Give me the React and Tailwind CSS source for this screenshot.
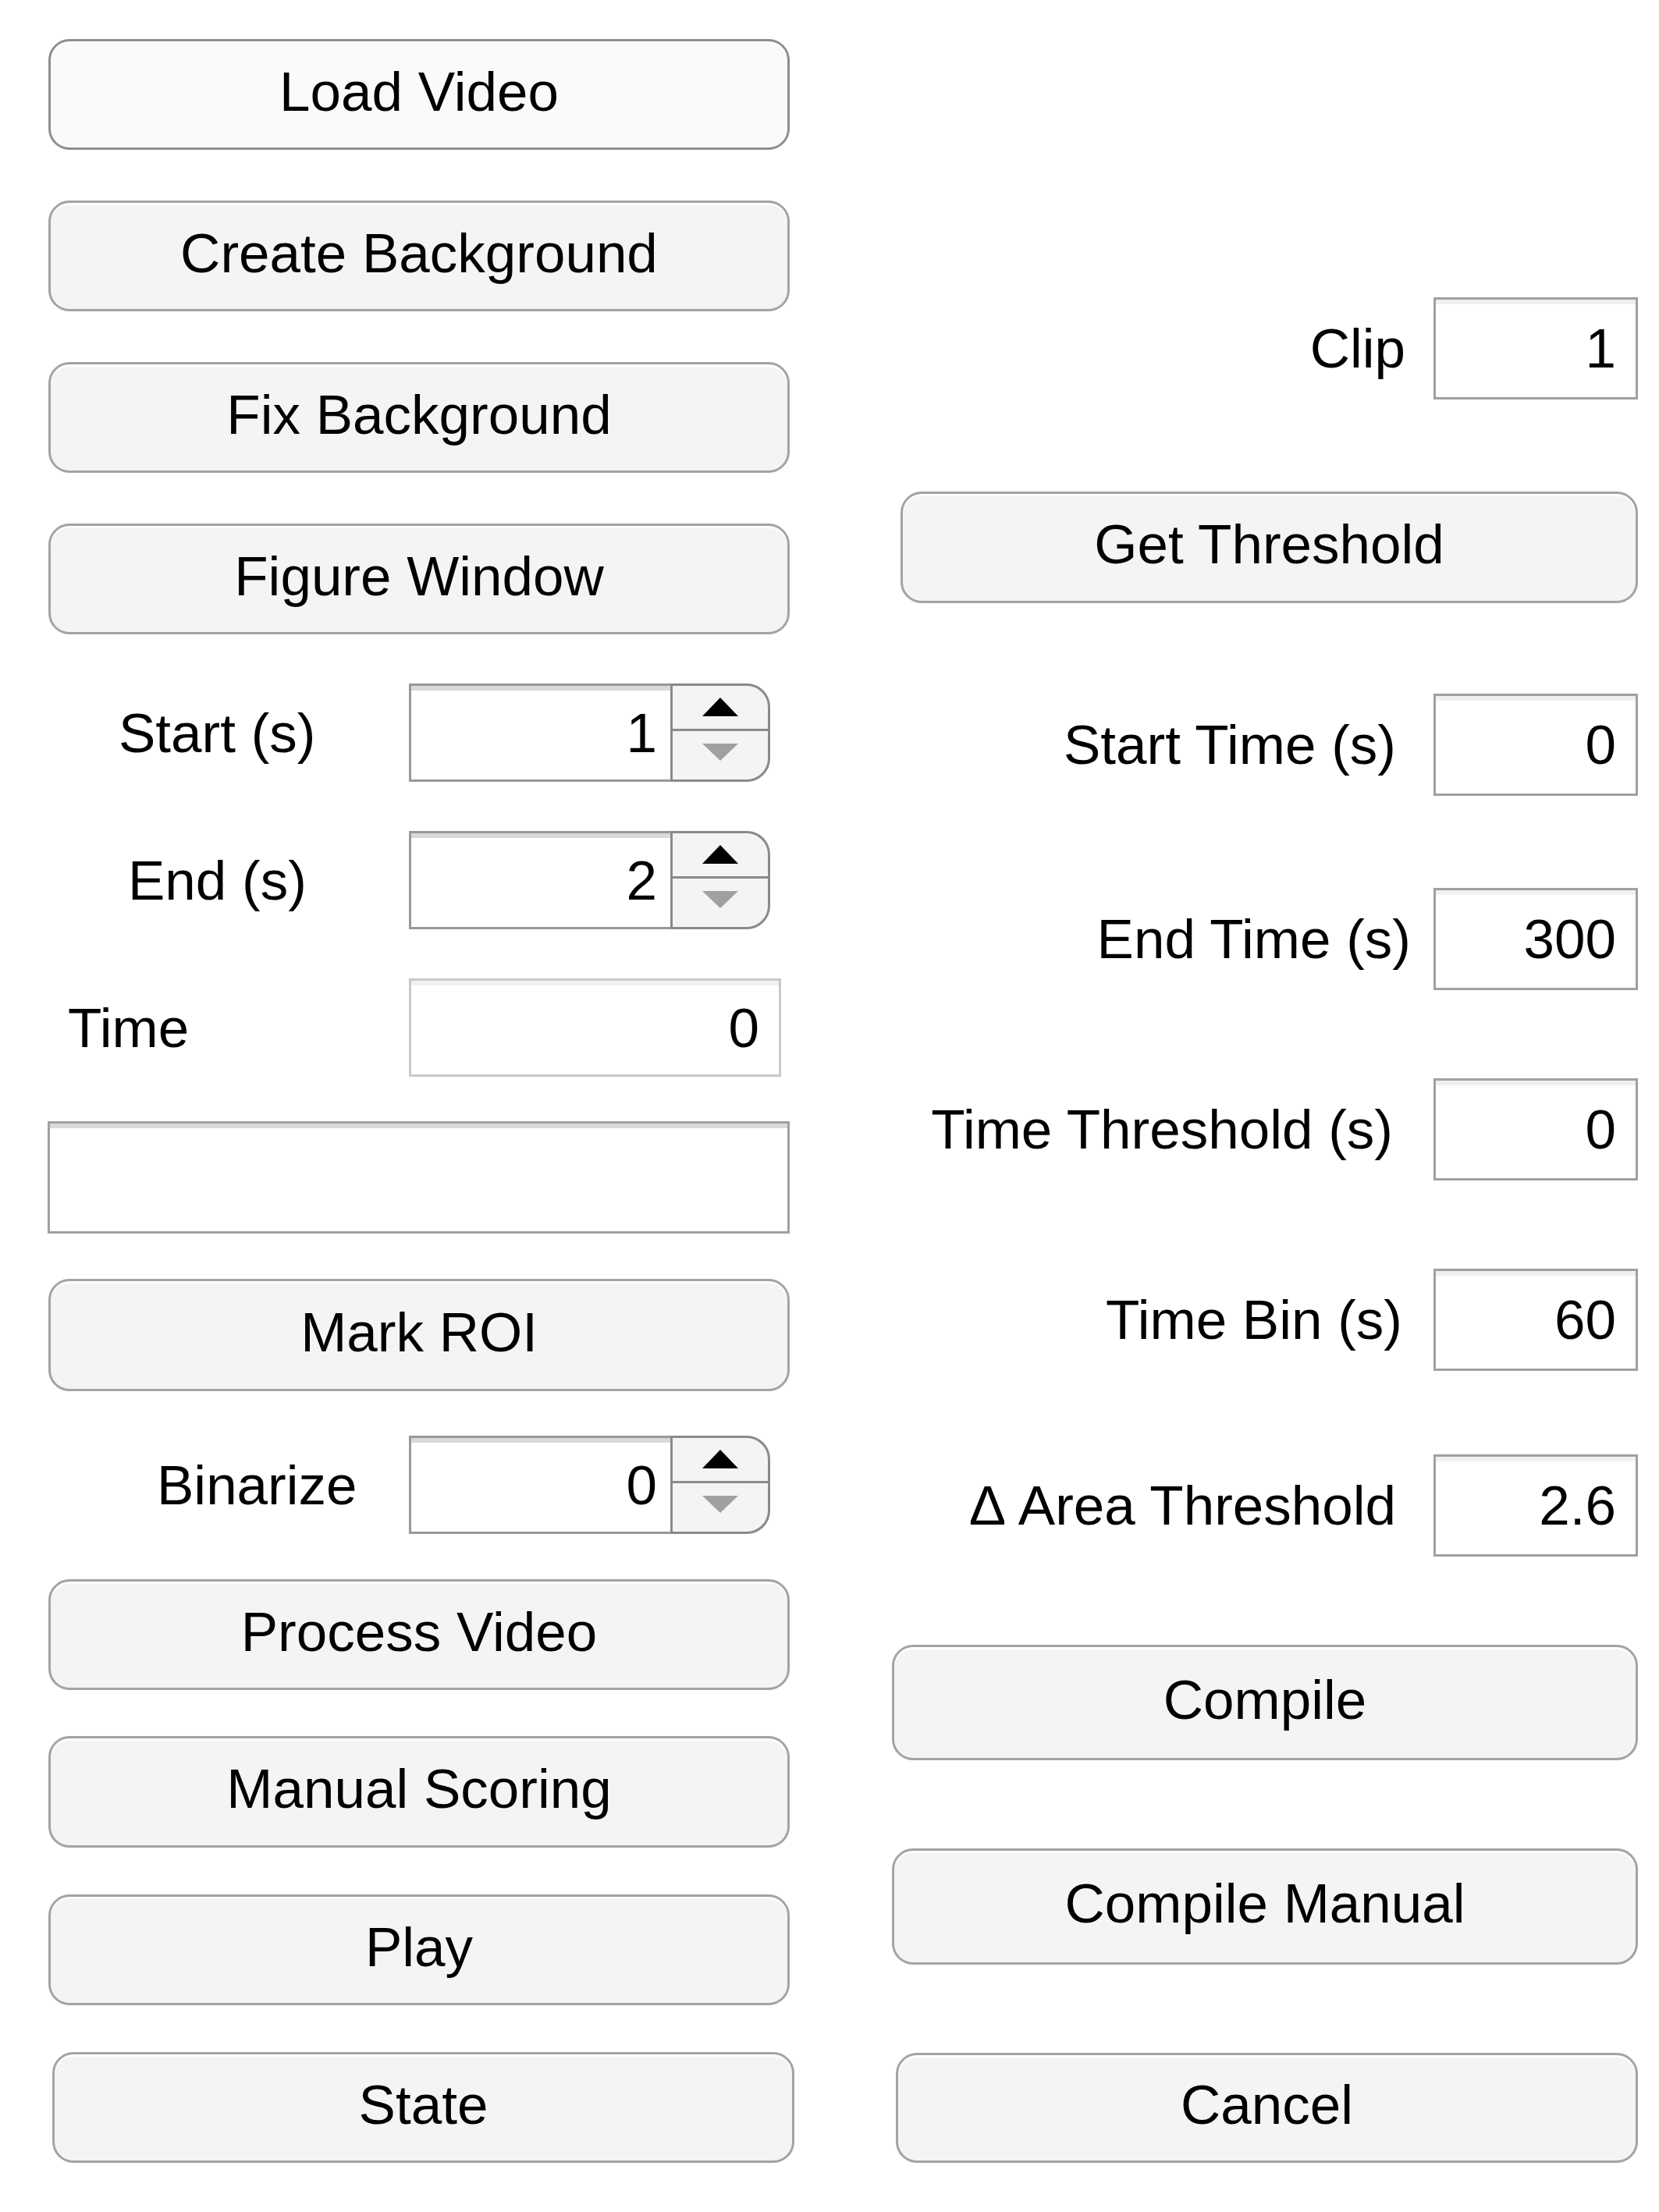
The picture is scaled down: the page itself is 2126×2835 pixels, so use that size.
import React from 'react';

function PushButton({ label, className = '', focused = false }) {
  return (
    <button
      type="button"
      className={`flex items-center justify-center pb-[8px] rounded-[27px] border-[3px] shadow-[inset_0_3px_0_#fdfdfd] leading-none ${
        focused ? 'border-[#8e8e8e] bg-[#fafafa]' : 'border-[#a3a3a3] bg-[#f4f4f4]'
      } ${className}`}
    >
      {label}
    </button>
  );
}

function EditField({ value = '', className = '', dim = false }) {
  return (
    <div
      className={`flex items-center justify-end pr-[25px] bg-white border-[3px] leading-none ${
        dim
          ? 'border-[#c9c9c9] shadow-[inset_0_6px_0_#f1f1f1]'
          : 'border-[#a0a0a0] shadow-[inset_0_6px_0_#f0f0f0]'
      } ${className}`}
    >
      {value}
    </div>
  );
}

function Spinner({ value }) {
  return (
    <div className="flex w-[463px] h-[126px]">
      <div className="flex flex-1 items-center justify-end pr-[17px] bg-white border-[3px] border-r-0 border-[#999999] shadow-[inset_0_6px_0_#d9d9d9] leading-none">
        {value}
      </div>
      <div className="flex w-[128px] flex-col overflow-hidden rounded-r-[30px] border-[3px] border-[#8a8a8a] bg-[#f4f4f4]">
        <div className="flex flex-1 items-center justify-center border-b-[3px] border-[#8a8a8a]">
          <svg width="46" height="24" viewBox="0 0 46 24">
            <path d="M23 0 L46 24 L0 24 Z" fill="#000" />
          </svg>
        </div>
        <div className="flex flex-1 items-center justify-center pb-[8px]">
          <svg width="46" height="22" viewBox="0 0 46 22">
            <path d="M0 0 L46 0 L23 22 Z" fill="#a0a0a0" />
          </svg>
        </div>
      </div>
    </div>
  );
}

function SpinRow({ label, pad, value, className = '' }) {
  return (
    <div className={`flex h-[126px] ${className}`}>
      <div className={`flex w-[524px] items-center leading-none ${pad}`}>{label}</div>
      <Spinner value={value} />
    </div>
  );
}

function FieldRow({ label, gap, value, className = '' }) {
  return (
    <div className={`flex h-[131px] items-center justify-end pr-[27px] ${className}`}>
      <span className={`leading-none ${gap}`}>{label}</span>
      <EditField value={value} className="w-[262px] h-[131px]" />
    </div>
  );
}

export default function App() {
  return (
    <div className="flex w-[2126px] h-[2835px] bg-white text-black text-[71px] font-['Liberation_Sans',Arial,sans-serif]">
      {/* left column */}
      <div className="flex w-[1100px] flex-col">
        <PushButton label="Load Video" focused className="mt-[50px] ml-[62px] w-[950px] h-[142px]" />
        <PushButton label="Create Background" className="mt-[65px] ml-[62px] w-[950px] h-[142px]" />
        <PushButton label="Fix Background" className="mt-[65px] ml-[62px] w-[950px] h-[142px]" />
        <PushButton label="Figure Window" className="mt-[65px] ml-[62px] w-[950px] h-[142px]" />

        <SpinRow label="Start (s)" pad="pl-[152px]" value="1" className="mt-[63px]" />
        <SpinRow label="End (s)" pad="pl-[164px]" value="2" className="mt-[63px]" />

        <div className="mt-[63px] flex h-[126px]">
          <div className="flex w-[524px] items-center pl-[87px] leading-none">Time</div>
          <EditField value="0" dim className="w-[477px] h-[126px]" />
        </div>

        <div className="mt-[57px] ml-[61px] w-[951px] h-[144px] bg-white border-[3px] border-[#a0a0a0] shadow-[inset_0_6px_0_#d9d9d9]" />

        <PushButton label="Mark ROI" className="mt-[58px] ml-[62px] w-[950px] h-[144px]" />

        <SpinRow label="Binarize" pad="pl-[201px]" value="0" className="mt-[57px]" />

        <PushButton label="Process Video" className="mt-[58px] ml-[62px] w-[950px] h-[142px]" />
        <PushButton label="Manual Scoring" className="mt-[59px] ml-[62px] w-[950px] h-[143px]" />
        <PushButton label="Play" className="mt-[60px] ml-[62px] w-[950px] h-[142px]" />
        <PushButton label="State" className="mt-[60px] ml-[67px] w-[951px] h-[142px]" />
      </div>

      {/* right column */}
      <div className="flex w-[1026px] flex-col">
        <FieldRow label="Clip" gap="mr-[36px]" value="1" className="mt-[381px]" />
        <PushButton label="Get Threshold" className="mt-[118px] ml-[54px] w-[945px] h-[143px]" />
        <FieldRow label="Start Time (s)" gap="mr-[48px]" value="0" className="mt-[116px]" />
        <FieldRow label="End Time (s)" gap="mr-[29px]" value="300" className="mt-[118px]" />
        <FieldRow label="Time Threshold (s)" gap="mr-[52px]" value="0" className="mt-[113px]" />
        <FieldRow label="Time Bin (s)" gap="mr-[40px]" value="60" className="mt-[113px]" />
        <FieldRow label="Δ Area Threshold" gap="mr-[48px]" value="2.6" className="mt-[107px]" />
        <PushButton label="Compile" className="mt-[113px] ml-[43px] w-[956px] h-[148px]" />
        <PushButton label="Compile Manual" className="mt-[113px] ml-[43px] w-[956px] h-[149px]" />
        <PushButton label="Cancel" className="mt-[113px] ml-[48px] w-[951px] h-[141px]" />
      </div>
    </div>
  );
}
